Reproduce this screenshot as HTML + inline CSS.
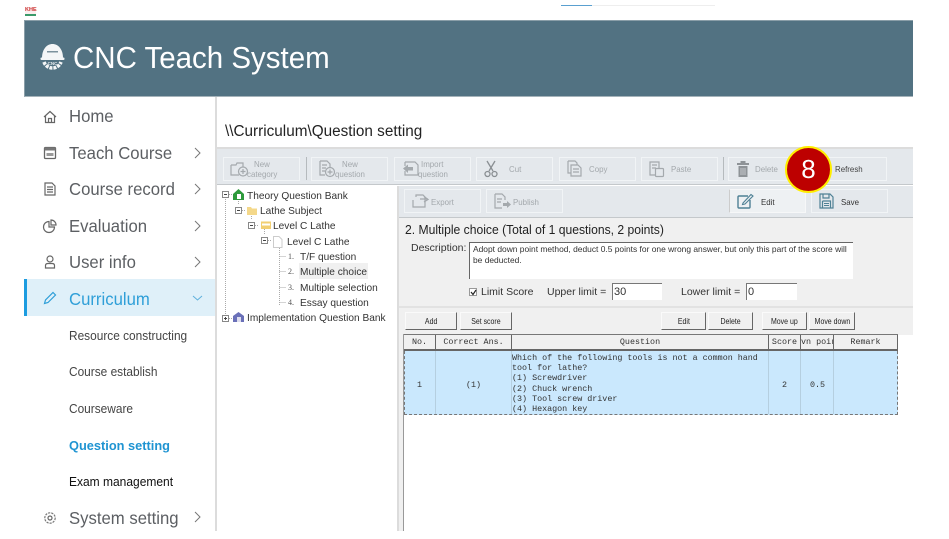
<!DOCTYPE html>
<html><head><meta charset="utf-8">
<style>
html,body{margin:0;padding:0;width:949px;height:539px;overflow:hidden;background:#fff;font-family:"Liberation Sans",sans-serif;}
#w{position:absolute;left:0;top:0;width:949px;height:539px;overflow:hidden;filter:blur(.3px);}
.a{position:absolute;white-space:nowrap;transform-origin:left center;}
.b{position:absolute;box-sizing:border-box;}
.nav{position:absolute;left:69px;font-size:17.5px;color:#5c5f63;white-space:nowrap;line-height:20px;transform:scaleX(.955);transform-origin:left center;}
.sub{position:absolute;left:69px;font-size:12.5px;color:#444;white-space:nowrap;line-height:16px;transform:scaleX(.95);transform-origin:left center;}
.tb{position:absolute;box-sizing:border-box;height:24px;border:1px solid #f1f4f6;background:#e4e8ec;}
.tt{position:absolute;font-size:8.5px;color:#a3a8ac;line-height:10px;white-space:nowrap;transform:scaleX(.93);transform-origin:left center;}
.tree{position:absolute;font-size:10.5px;color:#333;white-space:nowrap;line-height:14px;transform:scaleX(.965);transform-origin:left center;}
.num{position:absolute;font-size:8px;color:#555;font-family:"Liberation Serif",serif;line-height:12px;}
.btn{position:absolute;box-sizing:border-box;top:312px;height:18px;background:#f0f0f0;border:1px solid #fafafa;border-right:1px solid #666;border-bottom:1px solid #666;font-size:8px;color:#222;text-align:center;line-height:17px;white-space:nowrap;}
.btn span{display:inline-block;transform:scaleX(.87);}
.th{position:absolute;box-sizing:border-box;top:335px;height:16px;background:#f0f0f0;border-right:1px solid #666;border-bottom:2px solid #666;font:8.4px/15px "Liberation Mono",monospace;color:#333;text-align:center;white-space:nowrap;overflow:hidden;}
.m{position:absolute;font:8.37px/10.2px "Liberation Mono",monospace;color:#333;white-space:pre;}
svg{position:absolute;overflow:visible;}
.ic{fill:none;stroke:#666;stroke-width:1.2;}
.dis{fill:none;stroke:#a4a9ad;stroke-width:1.2;}
</style></head><body><div id="w">

<div class="b" style="left:25px;top:7px;width:11px;height:9px;background:#fbeeee;border-bottom:2px solid #3a9a6a;"></div>
<div class="a" style="left:25px;top:7px;font-size:5.500px;line-height:6px;color:#c33;font-weight:bold;">KHE</div>
<div class="b" style="left:561px;top:5px;width:154px;height:1px;background:#eee;"></div>
<div class="b" style="left:561px;top:5px;width:31px;height:1px;background:#5aa0d0;"></div>

<div class="b" style="left:24px;top:20px;width:889px;height:77px;background:#527282;border-top:1px solid #8a9ea8;border-left:1px solid #8a9ea8;border-bottom:1px solid #a5b3ba;"></div>
<svg style="left:40px;top:43px" width="25" height="28" viewBox="0 0 25 28">
<path d="M2 15 C2 6 7 1 12.500 1 C18 1 23 6 23 15 Z" fill="#f4f6f7"/>
<rect x="0.500" y="14.500" width="24" height="2.500" rx="1" fill="#f4f6f7"/>
<path d="M4 19 A9 9 0 0 0 21 19" fill="none" stroke="#f4f6f7" stroke-width="3.500" stroke-dasharray="3 1"/>
<rect x="7" y="8" width="11" height="1.500" fill="#7c929d"/>
<text x="12.500" y="22" font-size="4.500" font-weight="bold" fill="#e6ebee" text-anchor="middle" font-family="Liberation Sans">CNC</text>
</svg>
<div class="a" style="left:73px;top:39px;font-size:31px;line-height:38px;color:#fff;transform:scaleX(.951);">CNC Teach System</div>

<div class="b" style="left:215px;top:97px;width:2px;height:434px;background:#dcdcdc;"></div>

<svg style="left:43px;top:110px" width="14" height="14" viewBox="0 0 14 14"><path class="ic" d="M1 7 L7 1.500 L13 7 M2.500 6 V12.500 H11.500 V6 M5.500 12.500 V8.500 H8.500 V12.500"/></svg>
<div class="nav" style="top:106px">Home</div>
<svg style="left:43px;top:146px" width="14" height="14" viewBox="0 0 14 14"><rect x="1.500" y="1.500" width="11" height="11" rx="1" fill="none" stroke="#666" stroke-width="1.300"/><rect x="1.500" y="1.500" width="11" height="3" fill="#777"/><rect x="3.500" y="7" width="7" height="3" fill="#999"/></svg>
<div class="nav" style="top:143px">Teach Course</div>
<svg style="left:44px;top:182px" width="12" height="14" viewBox="0 0 12 14"><path class="ic" d="M1 1 H8 L11 4 V13 H1 Z M3 5 H9 M3 7.500 H9 M3 10 H9"/></svg>
<div class="nav" style="top:179px">Course record</div>
<svg style="left:43px;top:219px" width="14" height="14" viewBox="0 0 14 14"><path class="ic" d="M6 2.500 A5.500 5.500 0 1 0 11.500 8 H6 Z M8 1 A5 5 0 0 1 13 6 H8 Z"/></svg>
<div class="nav" style="top:216px">Evaluation</div>
<svg style="left:44px;top:255px" width="12" height="14" viewBox="0 0 12 14"><circle cx="6" cy="4" r="3" class="ic"/><path class="ic" d="M1.500 13 V10.500 Q1.500 8.500 4 8.500 H8 Q10.500 8.500 10.500 10.500 V13 Z"/></svg>
<div class="nav" style="top:252px">User info</div>

<div class="b" style="left:24px;top:279px;width:191px;height:37px;background:#dff0f9;border-left:3px solid #1c9ce0;"></div>
<svg style="left:43px;top:291px" width="14" height="14" viewBox="0 0 14 14"><path fill="none" stroke="#2f9fd8" stroke-width="1.200" d="M1.500 12.500 L2.500 9 L10 1.500 L12.500 4 L5 11.500 Z"/></svg>
<div class="nav" style="top:289px;color:#2f9fd8">Curriculum</div>

<svg style="left:194px;top:147px" width="7" height="12"><path d="M1 1 L6 6 L1 11" fill="none" stroke="#777" stroke-width="1"/></svg>
<svg style="left:194px;top:183px" width="7" height="12"><path d="M1 1 L6 6 L1 11" fill="none" stroke="#777" stroke-width="1"/></svg>
<svg style="left:194px;top:220px" width="7" height="12"><path d="M1 1 L6 6 L1 11" fill="none" stroke="#777" stroke-width="1"/></svg>
<svg style="left:194px;top:256px" width="7" height="12"><path d="M1 1 L6 6 L1 11" fill="none" stroke="#777" stroke-width="1"/></svg>
<svg style="left:192px;top:295px" width="11" height="6"><path d="M1 1 L5.500 5 L10 1" fill="none" stroke="#5fb0dc" stroke-width="1"/></svg>
<svg style="left:194px;top:511px" width="7" height="12"><path d="M1 1 L6 6 L1 11" fill="none" stroke="#777" stroke-width="1"/></svg>

<div class="sub" style="top:328px">Resource constructing</div>
<div class="sub" style="top:364px">Course establish</div>
<div class="sub" style="top:401px">Courseware</div>
<div class="sub" style="top:438px;color:#1f94d2;font-weight:bold;font-size:12.800px;transform:none">Question setting</div>
<div class="sub" style="top:474px;color:#111;transform:scaleX(.96)">Exam management</div>
<svg style="left:43px;top:511px" width="14" height="14" viewBox="0 0 14 14"><circle cx="7" cy="7" r="2" class="ic"/><circle cx="7" cy="7" r="5.200" fill="none" stroke="#777" stroke-width="1.200" stroke-dasharray="2.200 1"/></svg>
<div class="nav" style="top:508px">System setting</div>

<div class="a" style="left:225px;top:123px;font-size:15.300px;line-height:18px;color:#222">\\Curriculum\Question setting</div>

<div class="b" style="left:217px;top:147px;width:696px;height:2px;background:#dcdcdc;"></div>
<div class="b" style="left:217px;top:149px;width:696px;height:36px;background:#e4e8ec;border-bottom:1px solid #c4c8cb;"></div>

<div class="tb" style="left:223px;top:157px;width:77px"></div>
<svg style="left:230px;top:161px" width="20" height="16"><path class="dis" d="M1 4 H6 L7 2 H13 V6 M1 4 V14 H9"/><circle cx="13" cy="10.500" r="4.500" class="dis"/><path class="dis" d="M13 8 V13 M10.500 10.500 H15.500"/></svg>
<div class="tt" style="left:254px;top:159px">New</div><div class="tt" style="left:247px;top:169px">category</div>
<div class="b" style="left:306px;top:157px;width:1px;height:23px;background:#b5babd"></div>
<div class="tb" style="left:311px;top:157px;width:77px"></div>
<svg style="left:319px;top:160px" width="20" height="18"><path class="dis" d="M1 1 H8 L11 4 V8 M1 1 V15 H6 M3 5 H8 M3 8 H7 M3 11 H6"/><circle cx="11" cy="12" r="4.500" class="dis"/><path class="dis" d="M11 9.500 V14.500 M8.500 12 H13.500"/></svg>
<div class="tt" style="left:342px;top:159px">New</div><div class="tt" style="left:335px;top:169px">question</div>
<div class="tb" style="left:394px;top:157px;width:77px"></div>
<svg style="left:402px;top:161px" width="20" height="16"><path class="dis" d="M3 1 H13 L16 4 V14 H3 V10 M3 5 V1"/><path d="M1 7.500 L6 3.500 V6 H11 V9.500 H6 V12 Z" fill="#a4a9ad"/></svg>
<div class="tt" style="left:421px;top:159px">Import</div><div class="tt" style="left:418px;top:169px">question</div>
<div class="tb" style="left:476px;top:157px;width:77px"></div>
<svg style="left:484px;top:160px" width="14" height="18"><path d="M3 1 L9 11 M11 1 L5 11" fill="none" stroke="#8a8f93" stroke-width="1.300"/><circle cx="3.500" cy="14" r="2.500" fill="none" stroke="#8a8f93" stroke-width="1.300"/><circle cx="10.500" cy="14" r="2.500" fill="none" stroke="#8a8f93" stroke-width="1.300"/></svg>
<div class="tt" style="left:509px;top:164px">Cut</div>
<div class="tb" style="left:559px;top:157px;width:77px"></div>
<svg style="left:567px;top:160px" width="16" height="18"><path class="dis" d="M1 1 H8 L10 3 V5 M1 1 V13 H4"/><path class="dis" d="M4 5 H11 L14 8 V16 H4 Z M6 9 H12 M6 12 H12"/></svg>
<div class="tt" style="left:589px;top:164px">Copy</div>
<div class="tb" style="left:641px;top:157px;width:77px"></div>
<svg style="left:649px;top:160px" width="16" height="18"><path class="dis" d="M3 2 H10 V8 M3 2 H1 V15 H6 M3 5 H8 M3 8 H7"/><rect x="6.500" y="8.500" width="8" height="8" rx="1" class="dis"/></svg>
<div class="tt" style="left:671px;top:164px">Paste</div>
<div class="b" style="left:723px;top:157px;width:1px;height:23px;background:#b5babd"></div>
<div class="tb" style="left:728px;top:157px;width:77px"></div>
<svg style="left:737px;top:160px" width="12" height="18"><rect x="0" y="3" width="12" height="2" fill="#8e9397"/><rect x="3.500" y="1" width="5" height="2" fill="#8e9397"/><rect x="1.500" y="6" width="9" height="11" fill="#8e9397"/><path d="M4 8 V15 M6 8 V15 M8 8 V15" stroke="#d5d8da" stroke-width=".8"/></svg>
<div class="tt" style="left:755px;top:164px">Delete</div>
<div class="tb" style="left:810px;top:157px;width:77px"></div>
<div class="tt" style="left:835px;top:164px;color:#444">Refresh</div>

<div class="tree" style="left:247px;top:189px">Theory Question Bank</div>
<div class="tree" style="left:260px;top:204px">Lathe Subject</div>
<div class="tree" style="left:273px;top:219px">Level C Lathe</div>
<div class="tree" style="left:287px;top:235px">Level C Lathe</div>
<div class="b" style="left:299px;top:263px;width:69px;height:16px;background:#f0f0f0"></div>
<div class="num" style="left:288px;top:251px">1.</div><div class="tree" style="left:300px;top:250px">T/F question</div>
<div class="num" style="left:288px;top:266px">2.</div><div class="tree" style="left:300px;top:265px">Multiple choice</div>
<div class="num" style="left:288px;top:282px">3.</div><div class="tree" style="left:300px;top:281px">Multiple selection</div>
<div class="num" style="left:288px;top:297px">4.</div><div class="tree" style="left:300px;top:296px">Essay question</div>
<div class="tree" style="left:247px;top:311px">Implementation Question Bank</div>

<svg style="left:217px;top:186px" width="180" height="140">
<g fill="none" stroke="#aaa" stroke-dasharray="1 1" stroke-width="1">
<path d="M8.500 13 V128 M12 8.500 H15 M21.500 13 V19 M25 24.500 H29 M34.500 28 V34 M38 39.500 H42 M47.500 43 V49 M51 54.500 H54"/>
<path d="M62.500 58 V120 M62.500 70.500 H69 M62.500 85.500 H69 M62.500 101.500 H69 M62.500 116.500 H69 M12 132.500 H15"/></g>
<g fill="#fff" stroke="#888"><rect x="5.500" y="5.500" width="6" height="6"/><rect x="18.500" y="21.500" width="6" height="6"/><rect x="31.500" y="36.500" width="6" height="6"/><rect x="44.500" y="51.500" width="6" height="6"/><rect x="5.500" y="129.500" width="6" height="6"/></g>
<path d="M7 8.500 H10 M20 24.500 H23 M33 39.500 H36 M46 54.500 H49 M7 132.500 H10 M8.500 131 V134" stroke="#444"/>
<path d="M16 8 L21.500 3 L27 8 V14 H16 Z" fill="#2e9a3c"/><rect x="20" y="8" width="4" height="5" fill="#fff"/>
<path d="M16 136 V130 L21.500 126 L27 130 V136 Z" fill="#6a70b8"/><rect x="20" y="131" width="4" height="5" fill="#dde"/>
<path d="M30 21 H34 L35 22.500 H40 V29 H30 Z" fill="#f4d88a"/>
<rect x="44" y="35.500" width="10" height="7.500" fill="#f2cf72"/><rect x="45" y="37.500" width="8" height="2" fill="#fff"/>
<path d="M56.500 50.500 H62 L65 53.500 V61.500 H56.500 Z" fill="#fff" stroke="#ccc"/>
</svg>
<div class="b" style="left:397px;top:186px;width:2px;height:345px;background:#dcdcdc"></div>

<div class="b" style="left:399px;top:186px;width:514px;height:32px;background:#e4e8ec;border-bottom:1px solid #c4c8cb;"></div>
<div class="tb" style="left:404px;top:189px;width:77px"></div>
<svg style="left:411px;top:193px" width="20" height="16"><path class="dis" d="M5 4 V2 H12 L14 4 V14 H2 V7"/><path d="M9 6 L17 6 M13 3.500 L17 6.500 L13 9" fill="none" stroke="#a4a9ad" stroke-width="1.300"/></svg>
<div class="tt" style="left:431px;top:197px">Export</div>
<div class="tb" style="left:486px;top:189px;width:77px"></div>
<svg style="left:494px;top:193px" width="18" height="16"><path class="dis" d="M1 1 H8 L11 4 V7 M1 1 V15 H8 M3 6 H8 M3 9 H7"/><path d="M9 10 H13 V8 L17 11.500 L13 15 V13 H9 Z" fill="#a4a9ad"/></svg>
<div class="tt" style="left:513px;top:197px">Publish</div>
<div class="tb" style="left:729px;top:189px;width:77px;background:#eef1f3;border-color:#f6f7f8;border-left-color:#ccc"></div>
<svg style="left:737px;top:193px" width="17" height="16"><path d="M11 3 H2 Q1 3 1 4 V14 Q1 15 2 15 H12 Q13 15 13 14 V7" fill="none" stroke="#4f8195" stroke-width="1.400"/><path d="M6 10 L14 1.500 L16 3 L8 11 L5.500 11.500 Z" fill="none" stroke="#4f8195" stroke-width="1.100"/></svg>
<div class="tt" style="left:761px;top:197px;color:#333">Edit</div>
<div class="tb" style="left:811px;top:189px;width:77px"></div>
<svg style="left:819px;top:193px" width="15" height="16"><path d="M1 1 H11 L14 4 V15 H1 Z M4 1 V5 H10 V1 M3.500 8 H11.500 V15 M3.500 8 V15" fill="none" stroke="#4f8195" stroke-width="1.200"/><path d="M5 10.500 H10 M5 12.500 H10" stroke="#4f8195"/></svg>
<div class="tt" style="left:841px;top:197px;color:#333">Save</div>

<div class="b" style="left:399px;top:218px;width:514px;height:90px;background:#f0f0f0;border-bottom:2px solid #e2e2e2"></div>
<div class="a" style="left:405px;top:223px;font-size:12.700px;line-height:15px;color:#222;transform:scaleX(.956)">2. Multiple choice (Total of 1 questions, 2 points)</div>
<div class="a" style="left:411px;top:242px;font-size:10.500px;line-height:13px;color:#333">Description:</div>
<div class="b" style="left:469px;top:242px;width:384px;height:37px;background:#fff;border-top:1px solid #666;border-left:1px solid #666;"></div>
<div class="a" style="left:473px;top:244px;font-size:8.500px;line-height:10.500px;color:#333;transform:scaleX(.99);transform-origin:left top">Adopt down point method, deduct 0.5 points for one wrong answer, but only this part of the score will<br>be deducted.</div>
<div class="b" style="left:469px;top:288px;width:8px;height:8px;background:#fff;border:1px solid #999"></div>
<svg style="left:470px;top:289px" width="7" height="7"><path d="M1 3 L3 5.500 L6 1" fill="none" stroke="#222" stroke-width="1.200"/></svg>
<div class="a" style="left:481px;top:285px;font-size:10.500px;line-height:14px;color:#333">Limit Score</div>
<div class="a" style="left:547px;top:285px;font-size:10.500px;line-height:14px;color:#333">Upper limit =</div>
<div class="b" style="left:612px;top:283px;width:50px;height:17px;background:#fff;border-top:1px solid #777;border-left:1px solid #777;font-size:11px;line-height:16px;color:#333;padding-left:1px">30</div>
<div class="a" style="left:681px;top:285px;font-size:10.500px;line-height:14px;color:#333">Lower limit =</div>
<div class="b" style="left:746px;top:283px;width:51px;height:17px;background:#fff;border-top:1px solid #777;border-left:1px solid #777;font-size:11px;line-height:16px;color:#333;padding-left:1px">0</div>

<div class="b" style="left:399px;top:308px;width:514px;height:27px;background:#f0f0f0"></div>
<div class="btn" style="left:405px;width:52px"><span>Add</span></div>
<div class="btn" style="left:460px;width:52px"><span>Set score</span></div>
<div class="btn" style="left:661px;width:45px"><span>Edit</span></div>
<div class="btn" style="left:708px;width:45px"><span>Delete</span></div>
<div class="btn" style="left:762px;width:45px"><span>Move up</span></div>
<div class="btn" style="left:809px;width:46px"><span>Move down</span></div>

<div class="b" style="left:399px;top:335px;width:4px;height:196px;background:#f0f0f0"></div>
<div class="b" style="left:403px;top:334px;width:495px;height:1px;background:#777"></div>
<div class="b" style="left:403px;top:334px;width:1px;height:197px;background:#999"></div>
<div class="th" style="left:404px;width:32px">No.</div>
<div class="th" style="left:436px;width:76px">Correct Ans.</div>
<div class="th" style="left:512px;width:257px">Question</div>
<div class="th" style="left:769px;width:32px">Score</div>
<div class="th" style="left:801px;width:33px">vn poir</div>
<div class="th" style="left:834px;width:64px">Remark</div>
<div class="b" style="left:404px;top:351px;width:494px;height:64px;background:#cae8fd;border:1px dashed #777;border-top:0"></div>
<div class="b" style="left:435px;top:351px;width:1px;height:63px;background:#b5cfe0"></div>
<div class="b" style="left:511px;top:351px;width:1px;height:63px;background:#b5cfe0"></div>
<div class="b" style="left:768px;top:351px;width:1px;height:63px;background:#b5cfe0"></div>
<div class="b" style="left:800px;top:351px;width:1px;height:63px;background:#b5cfe0"></div>
<div class="b" style="left:833px;top:351px;width:1px;height:63px;background:#b5cfe0"></div>
<div class="m" style="left:512px;top:353px">Which of the following tools is not a common hand
tool for lathe?
(1) Screwdriver
(2) Chuck wrench
(3) Tool screw driver
(4) Hexagon key</div>
<div class="m" style="left:417px;top:380px">1</div>
<div class="m" style="left:466px;top:380px">(1)</div>
<div class="m" style="left:782px;top:380px">2</div>
<div class="m" style="left:810px;top:380px">0.5</div>

<div class="b" style="left:785px;top:146px;width:47px;height:47px;border-radius:50%;background:#bd0000;border:2px solid #ffee00;color:#fff;font-size:26px;line-height:43px;text-align:center;">8</div>
</div></body></html>
